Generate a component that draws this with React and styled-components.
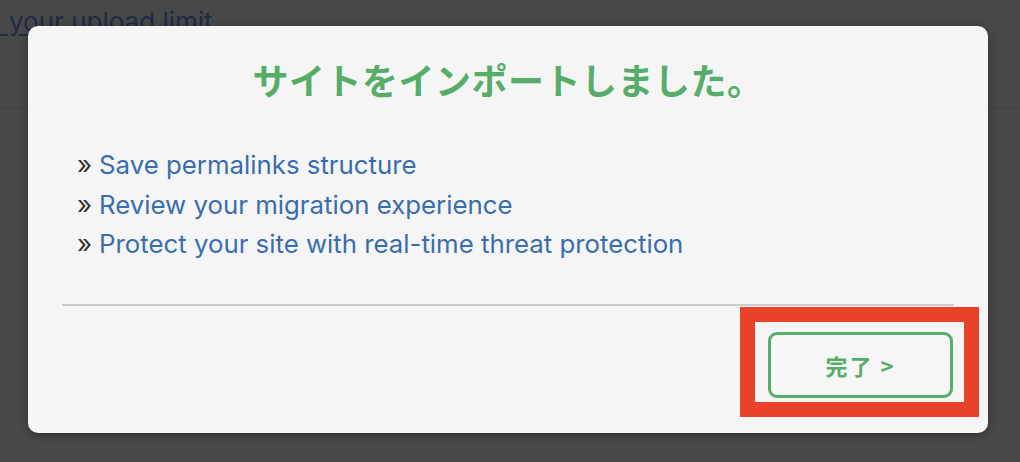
import React from 'react';
import styled, { createGlobalStyle } from 'styled-components';

const GlobalStyle = createGlobalStyle`
  html, body {
    margin: 0;
    padding: 0;
    background: #484848;
    overflow: hidden;
  }
  body {
    font-family: Inter, "Noto Sans", "Noto Sans CJK JP", sans-serif;
  }
`;

const Page = styled.div`
  position: relative;
  width: 1020px;
  height: 462px;
  background: #484848;
`;

const PageHeader = styled.div`
  height: 107px;
  border-bottom: 1px solid #3f3f3f;
  overflow: hidden;
`;

const HeaderLink = styled.a`
  display: block;
  margin: 4px 0 0 -20px;
  font-size: 26px;
  line-height: 36px;
  color: #1e2b45;
  text-decoration: underline;
  text-underline-offset: 3px;
  white-space: nowrap;
`;

const Modal = styled.div`
  position: absolute;
  top: 26px;
  left: 28px;
  width: 960px;
  height: 407px;
  box-sizing: border-box;
  background: #f5f5f5;
  border-radius: 10px;
  box-shadow: 0 2px 10px rgba(0, 0, 0, 0.35);
  display: flex;
  flex-direction: column;
  padding: 32px 34px 35px;
`;

const Title = styled.h2`
  margin: 0;
  text-align: center;
  font-family: "Noto Sans CJK JP", sans-serif;
  font-size: 36px;
  line-height: 42px;
  font-weight: 700;
  color: #56ad68;
  letter-spacing: 0.5px;
`;

const LinkList = styled.ul`
  list-style: none;
  margin: 45px 0 0;
  padding: 0 0 0 15px;
`;

const LinkItem = styled.li`
  font-size: 25.8px;
  line-height: 39.5px;
  color: #333;
  white-space: nowrap;
`;

const Arrows = styled.span`
  margin-right: 7px;
`;

const ItemLink = styled.a`
  color: #3a6dab;
  text-decoration: none;
`;

const Divider = styled.hr`
  margin: 40px 0 0;
  border: none;
  height: 2px;
  background: #cbcbcb;
`;

const Footer = styled.div`
  margin-top: auto;
  display: flex;
  justify-content: flex-end;
  padding-right: 1px;
`;

const Highlight = styled.div`
  position: relative;
`;

const Marker = styled.div`
  position: absolute;
  top: -25px;
  left: -28px;
  right: -26px;
  bottom: -19px;
  border: 15px solid #e9412a;
  pointer-events: none;
`;

const DoneButton = styled.button`
  width: 185px;
  height: 66px;
  box-sizing: border-box;
  border: 3px solid #59ad6a;
  border-radius: 9px;
  background: #f6f6f6;
  color: #56ad68;
  font-family: "Noto Sans CJK JP", sans-serif;
  font-size: 22px;
  font-weight: 700;
  letter-spacing: 2px;
  cursor: pointer;
`;

const links = [
  'Save permalinks structure',
  'Review your migration experience',
  'Protect your site with real-time threat protection',
];

const App = () => (
  <Page>
    <GlobalStyle />
    <PageHeader>
      <HeaderLink href="#">in your upload limit</HeaderLink>
    </PageHeader>
    <Modal>
      <Title>サイトをインポートしました。</Title>
      <LinkList>
        {links.map(text => (
          <LinkItem key={text}>
            <Arrows>»</Arrows>
            <ItemLink href="#">{text}</ItemLink>
          </LinkItem>
        ))}
      </LinkList>
      <Divider />
      <Footer>
        <Highlight>
          <DoneButton>完了 &gt;</DoneButton>
          <Marker />
        </Highlight>
      </Footer>
    </Modal>
  </Page>
);

export default App;
